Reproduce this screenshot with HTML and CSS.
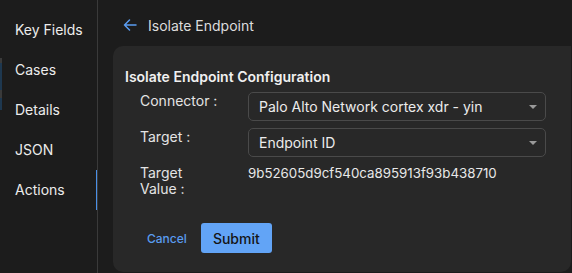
FILE: index.html
```html
<!DOCTYPE html>
<html lang="en">
<head>
  <meta charset="UTF-8">
  <meta name="viewport" content="width=device-width, initial-scale=1.0">
  <title>Isolate Endpoint</title>
  <link rel="stylesheet" href="styles.css">
</head>
<body>
  <div class="edge"></div>
  <nav class="sidebar">
    <a class="nav-item">Key Fields</a>
    <a class="nav-item">Cases</a>
    <a class="nav-item">Details</a>
    <a class="nav-item">JSON</a>
    <a class="nav-item active">Actions</a>
  </nav>

  <main class="main">
    <div class="header">
      <svg class="back" width="14" height="12" viewBox="0 0 14 12">
        <path d="M13 6H1.5M6.5 1L1.5 6l5 5" fill="none" stroke="#5a9cf0" stroke-width="1.5" stroke-linecap="round" stroke-linejoin="round"/>
      </svg>
      <span>Isolate Endpoint</span>
    </div>

    <section class="card">
      <h2>Isolate Endpoint Configuration</h2>
      <div class="form">
        <label>Connector :</label>
        <div class="select">
          <span>Palo Alto Network cortex xdr - yin</span>
          <span class="caret"></span>
        </div>

        <label>Target :</label>
        <div class="select">
          <span>Endpoint ID</span>
          <span class="caret"></span>
        </div>

        <label>Target Value :</label>
        <div class="value">9b52605d9cf540ca895913f93b438710</div>
      </div>

      <div class="actions">
        <button class="btn-cancel">Cancel</button>
        <button class="btn-submit">Submit</button>
      </div>
    </section>
  </main>
</body>
</html>
```

FILE: styles.css
```css
html, body {
  height: 100%;
}
body {
  margin: 0;
  display: flex;
  background-color: #1c1c1c;
  color: #e6e6e6;
  font-family: Inter, "Noto Sans", sans-serif;
  font-size: 14px;
  overflow: hidden;
}
.edge {
  position: absolute;
  left: 0;
  top: 58px;
  width: 2px;
  height: 52px;
  background: linear-gradient(#3a3a3a 0 5px, #1e3850 5px 32px, #3a3a3a 32px 40px, #1e3850 40px);
}
.sidebar {
  width: 97px;
  flex-shrink: 0;
  border-right: 1px solid #3a3a3a;
  padding-top: 10px;
  display: flex;
  flex-direction: column;
}
.nav-item {
  display: block;
  height: 40px;
  line-height: 40px;
  padding-left: 15px;
  color: #ececec;
  cursor: pointer;
}
.nav-item.active {
  box-shadow: inset -1px 0 0 #4a8fe6;
}
.main {
  flex: 1;
  padding-left: 15px;
  display: flex;
  flex-direction: column;
}
.header {
  height: 46px;
  display: flex;
  align-items: center;
  gap: 11px;
  padding-left: 10px;
  padding-top: 4px;
  color: #dcdcdc;
  box-sizing: border-box;
}
.back {
  display: block;
}
.card {
  flex: 1;
  background-color: #282828;
  border-radius: 10px 0 10px 10px;
  padding: 22px 0 0 12px;
  margin-right: 1px;
  margin-bottom: 1px;
}
.card h2 {
  margin: 0 0 6px;
  font-size: 14px;
  font-weight: 600;
  line-height: 18px;
  color: #f0f0f0;
}
.form {
  display: grid;
  grid-template-columns: 80px 298px;
  column-gap: 28px;
  row-gap: 7px;
  padding-left: 15px;
}
.form label {
  line-height: 16px;
  padding-top: 1px;
  color: #e4e4e4;
}
.select {
  height: 29px;
  box-sizing: border-box;
  border: 1px solid #4a4a4a;
  border-radius: 5px;
  display: flex;
  align-items: center;
  justify-content: space-between;
  padding: 0 8px 0 10px;
  color: #ececec;
}
.caret {
  width: 0;
  height: 0;
  border-left: 4px solid transparent;
  border-right: 4px solid transparent;
  border-top: 4px solid #9a9a9a;
}
.value {
  line-height: 16px;
  padding-top: 1px;
  font-size: 13.3px;
  color: #e8e8e8;
}
.actions {
  display: flex;
  align-items: center;
  gap: 14px;
  margin-top: 26px;
  padding-left: 22px;
}
.actions button {
  font-family: inherit;
  border: none;
  cursor: pointer;
}
.btn-cancel {
  background: none;
  color: #5a9cf0;
  font-size: 12px;
  font-weight: 500;
  padding: 0;
}
.btn-submit {
  width: 71px;
  height: 30px;
  border-radius: 3px;
  background-color: #62a4f6;
  color: #151515;
  font-size: 14px;
  font-weight: 500;
}
```
